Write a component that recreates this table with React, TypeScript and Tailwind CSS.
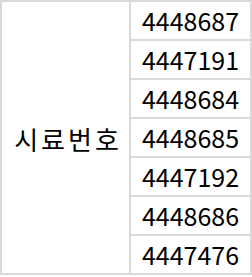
const SAMPLE_IDS = ["4448687", "4447191", "4448684", "4448685", "4447192", "4448686", "4447476"];

export default function App() {
    return (
        <div className="bg-white w-[252px] h-[277px]">
            <div
                className="grid grid-cols-[127px_119px] grid-rows-[repeat(7,37px)] gap-[2px] p-[2px] bg-[#d9d9d9] w-fit text-[25px] text-black"
                style={{ fontFamily: '"Noto Sans CJK KR", "Noto Sans", sans-serif' }}
            >
                <div className="row-span-7 bg-white flex items-center justify-center leading-none text-[26px] tracking-[3px] pl-[5px] pt-[2px]">
                    시료번호
                </div>
                {SAMPLE_IDS.map((id) => (
                    <div key={id} className="bg-white flex items-center justify-center leading-none">
                        {id}
                    </div>
                ))}
            </div>
        </div>
    );
}
